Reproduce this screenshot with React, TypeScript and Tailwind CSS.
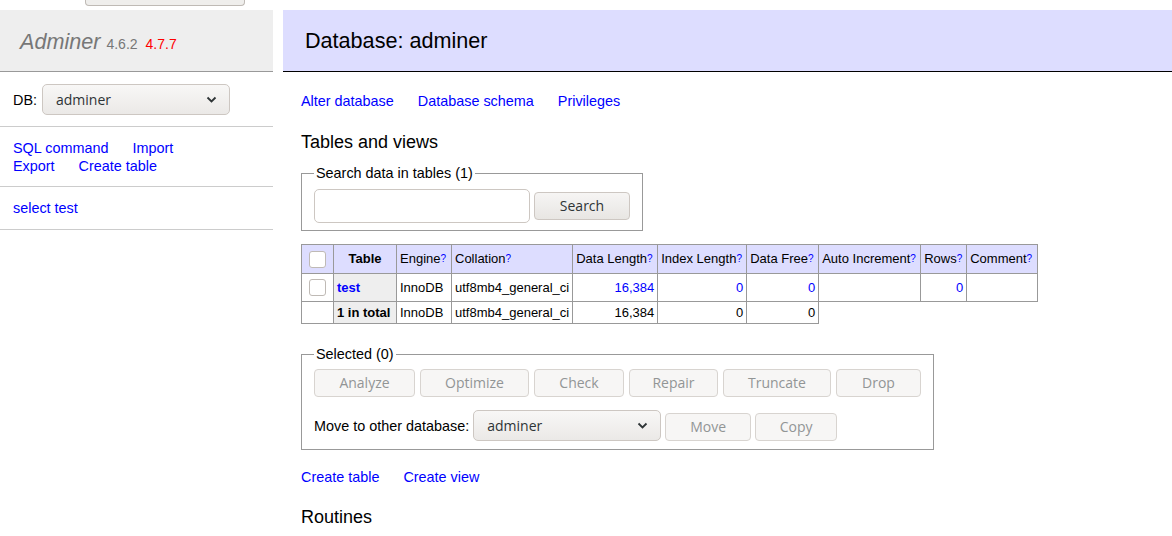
import type { ReactNode } from "react";

const sans = "font-['Liberation_Sans',Arial,sans-serif]";
const gtk = "font-['Open_Sans','Noto_Sans',sans-serif]";

function Chevron() {
  return (
    <svg width="11" height="7" viewBox="0 0 11 7">
      <path d="M1.5 1.5l4 4 4-4" fill="none" stroke="#2e3436" strokeWidth="1.8" />
    </svg>
  );
}

function Select({ w, h }: { w: string; h: string }) {
  return (
    <div className={`${w} ${h} ${gtk} flex items-center justify-between pl-[13px] pr-[12px] rounded-[5px] border border-[#cdc7c2] bg-gradient-to-b from-[#f8f7f6] to-[#ebe9e7] text-[14px] text-[#2e3436]`}>
      <span>adminer</span>
      <Chevron />
    </div>
  );
}

function Btn({ label, w, disabled = true }: { label: string; w: string; disabled?: boolean }) {
  return (
    <button
      className={`${w} ${gtk} h-[28px] rounded-[4px] border text-[14px] ${
        disabled
          ? "border-[#d8d4d0] bg-[#f7f6f5] text-[#929595]"
          : "border-[#cdc7c2] bg-gradient-to-b from-[#f6f5f4] to-[#e8e6e3] text-[#2e3436]"
      }`}
    >
      {label}
    </button>
  );
}

function Check() {
  return <div className="w-[17px] h-[17px] rounded-[3px] border border-[#bfbab5] bg-white mx-auto" />;
}

function Help() {
  return <sup className="text-[#00f] text-[10px] relative -top-[1px]">?</sup>;
}

const td = "border border-[#999] px-[3px] whitespace-nowrap";

function Th({ children, w }: { children: ReactNode; w: string }) {
  return <td className={`${td} ${w} bg-[#ddf] text-left font-normal`}>{children}</td>;
}

export default function App() {
  return (
    <div className={`${sans} w-[1172px] h-[536px] overflow-hidden bg-white text-[14.4px] leading-[18px] text-black`}>
      {/* tail of the logout button scrolled off the top */}
      <div className="h-[6px]">
        <div className="ml-[85px] w-[160px] h-[6px] rounded-b-[4px] border border-t-0 border-[#bfbab5] bg-[#efeeec]" />
      </div>
      <div className="flex mt-[4px]">
        <div className="w-[273px] shrink-0">
          <div className="h-[62px] bg-[#eee] border-b border-[#999] flex items-center pl-[20px] pt-[2px]">
            <span className="italic text-[21.6px] text-[#777]">Adminer</span>
            <span className="text-[14px] text-[#777] ml-[6px] mt-[4px]">4.6.2</span>
            <span className="text-[14px] text-[#f00] ml-[8px] mt-[4px]">4.7.7</span>
          </div>
          <div className="flex items-center pl-[13px] pt-[12px] pb-[11px] border-b border-[#ccc]">
            <span className="mr-[5px]">DB:</span>
            <Select w="w-[188px]" h="h-[31px]" />
          </div>
          <div className="pl-[13px] pt-[12px] pb-[11px] border-b border-[#ccc] text-[#00f]">
            <div>
              <a className="mr-[24px]">SQL command</a>
              <a>Import</a>
            </div>
            <div>
              <a className="mr-[24px]">Export</a>
              <a>Create table</a>
            </div>
          </div>
          <div className="pl-[13px] pt-[12px] pb-[12px] border-b border-[#ccc] text-[#00f]">
            <a>select test</a>
          </div>
        </div>

        <div className="flex-1 ml-[10px]">
          <div className="h-[62px] bg-[#ddf] border-b border-black flex items-center pl-[22px] pt-[1px]">
            <h2 className="text-[21.6px]">Database: adminer</h2>
          </div>
          <div className="pl-[18px]">
            <div className="mt-[20px] text-[#00f] flex gap-[24px]">
              <a>Alter database</a>
              <a>Database schema</a>
              <a>Privileges</a>
            </div>
            <h3 className="mt-[21px] text-[18px] leading-[22px]">Tables and views</h3>

            <fieldset className="mt-[11px] w-[341px] border border-[#999] px-[12px] pb-[7px]">
              <legend className="px-[2px]">Search data in tables (1)</legend>
              <div className="flex items-center gap-[4px] mt-[7px]">
                <div className="w-[216px] h-[34px] rounded-[5px] border border-[#cdc7c2] bg-white" />
                <Btn label="Search" w="w-[96px]" disabled={false} />
              </div>
            </fieldset>

            <table className="mt-[13px] border-collapse text-[13px] leading-[16px]">
              <thead>
                <tr className="h-[29px]">
                  <td className={`${td} w-[32px] bg-[#ddf]`}>
                    <Check />
                  </td>
                  <th className={`${td} w-[63px] bg-[#ddf] text-center font-bold`}>Table</th>
                  <Th w="w-[55px]">Engine<Help /></Th>
                  <Th w="w-[120px]">Collation<Help /></Th>
                  <Th w="w-[85px]">Data Length<Help /></Th>
                  <Th w="w-[89px]">Index Length<Help /></Th>
                  <Th w="w-[72px]">Data Free<Help /></Th>
                  <Th w="w-[102px]">Auto Increment<Help /></Th>
                  <Th w="w-[46px]">Rows<Help /></Th>
                  <Th w="w-[71px]">Comment<Help /></Th>
                </tr>
              </thead>
              <tbody>
                <tr className="h-[28px]">
                  <td className={td}>
                    <Check />
                  </td>
                  <th className={`${td} bg-[#eee] text-left font-bold text-[#00f]`}>test</th>
                  <td className={td}>InnoDB</td>
                  <td className={td}>utf8mb4_general_ci</td>
                  <td className={`${td} text-right text-[#00f]`}>16,384</td>
                  <td className={`${td} text-right text-[#00f]`}>0</td>
                  <td className={`${td} text-right text-[#00f]`}>0</td>
                  <td className={td}></td>
                  <td className={`${td} text-right text-[#00f]`}>0</td>
                  <td className={td}></td>
                </tr>
                <tr className="h-[22px]">
                  <td className={td}></td>
                  <th className={`${td} bg-[#eee] text-left font-bold`}>1 in total</th>
                  <td className={td}>InnoDB</td>
                  <td className={td}>utf8mb4_general_ci</td>
                  <td className={`${td} text-right`}>16,384</td>
                  <td className={`${td} text-right`}>0</td>
                  <td className={`${td} text-right`}>0</td>
                </tr>
              </tbody>
            </table>

            <fieldset className="mt-[21px] w-fit border border-[#999] px-[12px] pb-[8px]">
              <legend className="px-[2px]">Selected (0)</legend>
              <div className="flex gap-[5px] mt-[6px]">
                <Btn label="Analyze" w="w-[101px]" />
                <Btn label="Optimize" w="w-[109px]" />
                <Btn label="Check" w="w-[90px]" />
                <Btn label="Repair" w="w-[89px]" />
                <Btn label="Truncate" w="w-[108px]" />
                <Btn label="Drop" w="w-[85px]" />
              </div>
              <div className="flex items-center mt-[13px]">
                <span className="mr-[4px]">Move to other database:</span>
                <Select w="w-[188px]" h="h-[31px]" />
                <div className="flex gap-[4px] ml-[4px] mt-[2px]">
                  <Btn label="Move" w="w-[86px]" />
                  <Btn label="Copy" w="w-[82px]" />
                </div>
              </div>
            </fieldset>

            <div className="mt-[18px] text-[#00f] flex gap-[24px]">
              <a>Create table</a>
              <a>Create view</a>
            </div>
            <h3 className="mt-[20px] text-[18px] leading-[22px]">Routines</h3>
          </div>
        </div>
      </div>
    </div>
  );
}
